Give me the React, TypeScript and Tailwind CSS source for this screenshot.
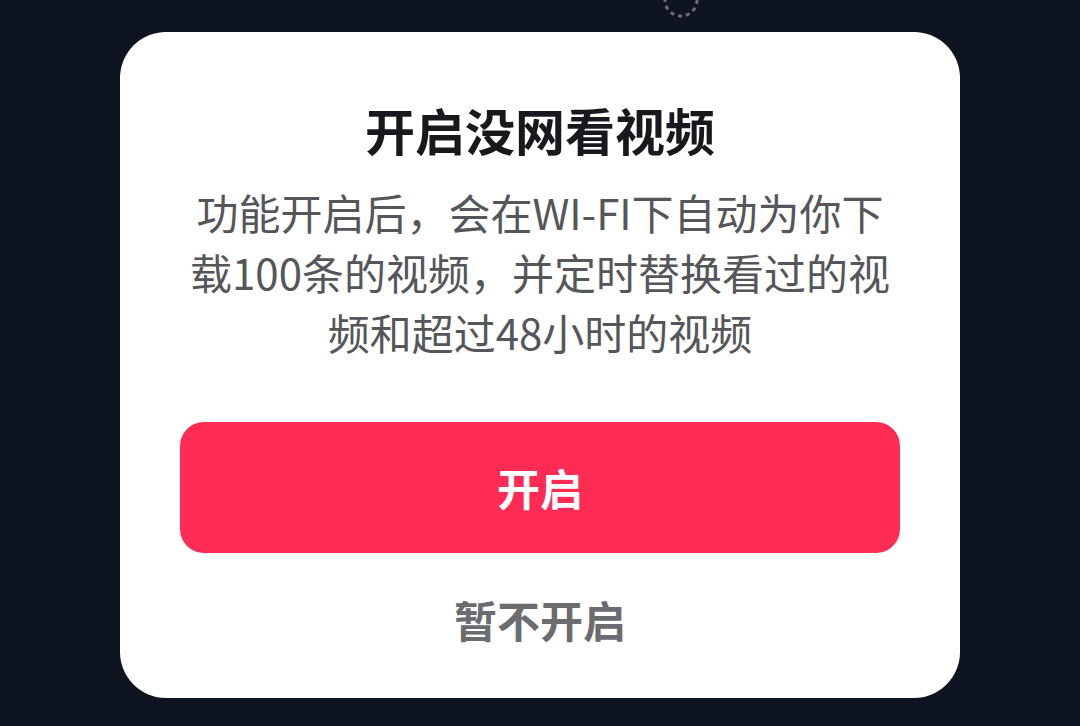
export default function App() {
  return (
    <div
      className="relative min-h-screen w-full overflow-hidden bg-[#0f1520] px-[120px] pt-[32px]"
      style={{ fontFamily: '"Noto Sans CJK SC", "Noto Sans", sans-serif' }}
    >
      {/* loading ring peeking in from the top edge */}
      <svg className="absolute left-[662px] top-[-19px]" width="38" height="38" viewBox="0 0 38 38">
        <circle cx="19" cy="19" r="16" fill="none" stroke="#6b6f78" strokeWidth="3" strokeDasharray="4 4" />
      </svg>

      <div className="flex h-[666px] flex-col items-center rounded-[46px] bg-white px-[60px] pt-[67px]">
        <h1 className="text-[50px] font-bold leading-[60px] text-[#18191d]">开启没网看视频</h1>
        <p className="mt-[23px] text-center text-[42px] leading-[60px] text-[#55565a]">
          功能开启后，会在WI-FI下自动为你下
          <br />
          载100条的视频，并定时替换看过的视
          <br />
          频和超过48小时的视频
        </p>
        <button className="mt-[60px] flex h-[131px] w-full items-center justify-center rounded-[24px] bg-[#fe2c55] text-[43px] font-bold text-white">
          开启
        </button>
        <button className="mt-[36px] text-[43px] font-bold leading-[60px] text-[#6b6c70]">暂不开启</button>
      </div>
    </div>
  );
}
